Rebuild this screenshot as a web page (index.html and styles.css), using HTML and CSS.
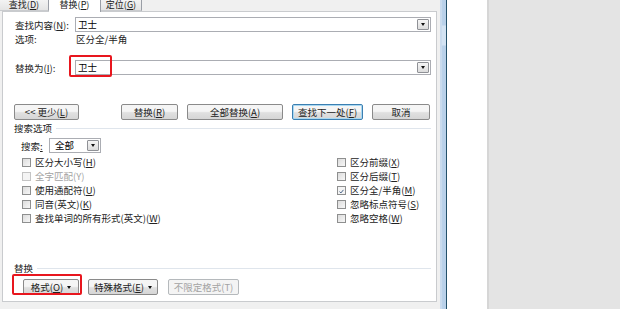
FILE: index.html
```html
<!DOCTYPE html>
<html lang="zh-CN">
<head>
  <meta charset="UTF-8" />
  <meta name="viewport" content="width=device-width, initial-scale=1.0"/>
  <title>查找和替换</title>
  <link rel="stylesheet" href="styles.css">
</head>
<body>
  <div class="dialog">
    <div class="tabs">
      <div class="tab">查找(<u>D</u>)</div>
      <div class="tab active">替换(<u>P</u>)</div>
      <div class="tab">定位(<u>G</u>)</div>
    </div>

    <div class="panel">
      <div class="field find">
        <span class="field-label">查找内容(<u>N</u>):</span>
        <div class="combo">
          <span class="combo-text">卫士</span>
          <span class="combo-btn"><span class="arrow"></span></span>
        </div>
      </div>
      <div class="options">
        <span class="field-label">选项:</span>
        <span class="options-value">区分全/半角</span>
      </div>
      <div class="field replace">
        <span class="field-label">替换为(<u>I</u>):</span>
        <div class="combo">
          <span class="combo-text">卫士</span>
          <span class="combo-btn"><span class="arrow"></span></span>
        </div>
        <span class="mark mark-input"></span>
      </div>

      <div class="actions">
        <button class="btn btn-less"><span>&lt;&lt; 更少(<u>L</u>)</span></button>
        <button class="btn btn-replace"><span>替换(<u>R</u>)</span></button>
        <button class="btn btn-all"><span>全部替换(<u>A</u>)</span></button>
        <button class="btn btn-next"><span>查找下一处(<u>F</u>)</span></button>
        <button class="btn btn-cancel"><span>取消</span></button>
      </div>

      <div class="group-title search-title"><span>搜索选项</span></div>
      <div class="search-row">
        <span class="search-label">搜索<u>:</u></span>
        <div class="combo combo-small">
          <span class="combo-text">全部</span>
          <span class="combo-btn"><span class="arrow"></span></span>
        </div>
      </div>

      <div class="checks">
        <div class="check-col left">
          <div class="check"><span class="box"></span><span>区分大小写(<u>H</u>)</span></div>
          <div class="check disabled"><span class="box"></span><span>全字匹配(Y)</span></div>
          <div class="check"><span class="box"></span><span>使用通配符(<u>U</u>)</span></div>
          <div class="check"><span class="box"></span><span>同音(英文)(<u>K</u>)</span></div>
          <div class="check"><span class="box"></span><span>查找单词的所有形式(英文)(<u>W</u>)</span></div>
        </div>
        <div class="check-col">
          <div class="check"><span class="box"></span><span>区分前缀(<u>X</u>)</span></div>
          <div class="check"><span class="box"></span><span>区分后缀(<u>T</u>)</span></div>
          <div class="check"><span class="box checked"><svg viewBox="0 0 9 9" width="9" height="9"><path d="M2 4.6 L3.7 6.4 L7 2.4" fill="none" stroke="#3d5a80" stroke-width="1.2"/></svg></span><span>区分全/半角(<u>M</u>)</span></div>
          <div class="check"><span class="box"></span><span>忽略标点符号(<u>S</u>)</span></div>
          <div class="check"><span class="box"></span><span>忽略空格(<u>W</u>)</span></div>
        </div>
      </div>

      <div class="group-title replace-title"><span>替换</span></div>
      <div class="format-row">
        <button class="btn btn-format"><span>格式(<u>O</u>)</span><span class="arrow"></span></button>
        <button class="btn btn-special"><span>特殊格式(<u>E</u>)</span><span class="arrow"></span></button>
        <button class="btn btn-plain" disabled><span>不限定格式(T)</span></button>
        <span class="mark mark-format"></span>
      </div>
    </div>
  </div>

  <div class="frame"></div>
  <div class="page"></div>
  <div class="gutter"></div>
</body>
</html>
```

FILE: styles.css
```css
body {
  margin: 0;
  display: flex;
  height: 309px;
  overflow: hidden;
  font-family: "Noto Sans CJK SC", "Liberation Sans", sans-serif;
  font-size: 9.5px;
  color: #222;
  background: #e4e4e4;
  text-autospace: no-autospace;
}

u {
  text-decoration-thickness: 1px;
  text-underline-offset: 1px;
}

/* dialog */
.dialog {
  width: 440px;
  flex: none;
  background: #f0f0f0;
}

.tabs {
  display: flex;
  height: 11px;
}

.tab {
  height: 11px;
  font-size: 9px;
  line-height: 10px;
  text-align: center;
  box-sizing: border-box;
  background: linear-gradient(#f3f3f3, #e4e4e4);
  border-right: 1px solid #9a9ea6;
  border-bottom: 1px solid #c9cbce;
}

.tab:nth-child(1) { width: 49px; }
.tab:nth-child(2) { width: 52px; }
.tab:nth-child(3) { width: 41px; }

.tab.active {
  height: 12px;
  background: #fff;
  border-bottom: none;
  position: relative;
  z-index: 1;
}

.panel {
  margin-left: 2px;
  width: 435px;
  height: 291px;
  box-sizing: border-box;
  background: #fff;
  border: 1px solid #c9cbce;
  padding: 0 5px 0 11px;
}

.field {
  display: flex;
  align-items: center;
  height: 15px;
  position: relative;
}

.field.find { margin-top: 5px; }
.field.replace { margin-top: 16px; }

.field-label {
  width: 61px;
  padding-left: 1px;
  flex: none;
  box-sizing: border-box;
}

.combo {
  flex: 1;
  height: 15px;
  box-sizing: border-box;
  border: 1px solid #abadb3;
  display: flex;
  align-items: center;
  color: #000;
}

.combo-text {
  flex: 1;
  padding-left: 2px;
  line-height: 13px;
}

.combo-btn {
  width: 12px;
  height: 11px;
  margin-right: 1px;
  box-sizing: border-box;
  border: 1px solid #8f9196;
  border-radius: 1px;
  background: linear-gradient(#f6f6f6, #dcdcdc);
  display: flex;
  align-items: center;
  justify-content: center;
}

.arrow {
  width: 0;
  height: 0;
  border-left: 2.5px solid transparent;
  border-right: 2.5px solid transparent;
  border-top: 3px solid #111;
}

.options {
  display: flex;
  height: 10px;
  line-height: 10px;
  margin-top: 2px;
}

.options-value { padding-left: 1px; }

/* buttons */
.actions {
  display: flex;
  margin-top: 29px;
}

.btn {
  height: 16px;
  padding: 0;
  box-sizing: border-box;
  border: 1px solid #8a8a8a;
  border-radius: 2px;
  background: linear-gradient(#f5f5f5 45%, #e0e0e0 55%, #d6d6d6);
  font-family: inherit;
  font-size: 9.5px;
  color: #222;
  line-height: 13px;
  display: flex;
  align-items: center;
  justify-content: center;
  text-autospace: no-autospace;
}

.btn-less { width: 65px; }
.btn-replace { width: 57px; margin-left: 42px; }
.btn-all { width: 96px; margin-left: 9px; }
.btn-next {
  width: 71px;
  margin-left: 9px;
  border-color: #3c7fb1;
  box-shadow: inset 0 0 0 1px #a8d8f2;
}
.btn-cancel { width: 58px; margin-left: 9px; }

.group-title {
  display: flex;
  align-items: center;
  gap: 4px;
  height: 10px;
  line-height: 10px;
}

.group-title::after {
  content: "";
  flex: 1;
  border-top: 1px solid #dfe5ec;
}

.search-title { margin-top: 3px; }
.replace-title { margin-top: 38px; }

.search-row {
  display: flex;
  align-items: center;
  height: 15px;
  margin: 5px 0 0 6px;
}

.search-label { width: 29px; padding-left: 1px; box-sizing: border-box; }

.combo-small {
  flex: none;
  width: 52px;
}

.combo-small .combo-text { padding-left: 5px; }

/* checkboxes */
.checks {
  display: flex;
  margin-top: 2px;
  padding-left: 8px;
}

.check-col {
  display: flex;
  flex-direction: column;
}

.check-col.left { width: 315px; }

.check {
  display: flex;
  align-items: center;
  gap: 4px;
  height: 14px;
}

.box {
  width: 9px;
  height: 9px;
  box-sizing: border-box;
  border: 1px solid #8e8f8f;
  background: linear-gradient(135deg, #dcdcdc, #f7f7f7);
  display: flex;
}

.box.checked { background: #f4f4f4; }

.check.disabled { color: #a3a3a3; }
.check.disabled .box { border-color: #c4c4c4; background: #f4f4f4; }

.format-row {
  display: flex;
  margin-top: 6px;
  padding-left: 9px;
  position: relative;
}

.btn .arrow { margin-left: 4px; }

.btn-format { width: 56px; }
.btn-special { width: 70px; margin-left: 9px; }
.btn-plain {
  width: 71px;
  margin-left: 10px;
  color: #a3a3a3;
  border-color: #b5b9bc;
  background: #f4f4f4;
}

/* red annotation boxes */
.mark {
  position: absolute;
  border: 2px solid #e8161e;
  border-radius: 2px;
  box-sizing: border-box;
}

.mark-input { left: 55px; top: -5px; width: 43px; height: 22px; }
.mark-format { left: -2px; top: -5px; width: 70px; height: 21px; }

/* window edge and page */
.frame {
  width: 7px;
  flex: none;
  box-sizing: border-box;
  border-left: 2px solid #c9dbee;
  border-right: 1px solid #23506a;
  background: linear-gradient(#b9d1ea 25px, #d3e3f3 26px, #d3e3f3 45px, #b9d1ea 46px);
}

.page {
  width: 40px;
  flex: none;
  background: #fff;
}

.gutter {
  width: 2px;
  flex: none;
  background: #d6d6d6;
}
```
